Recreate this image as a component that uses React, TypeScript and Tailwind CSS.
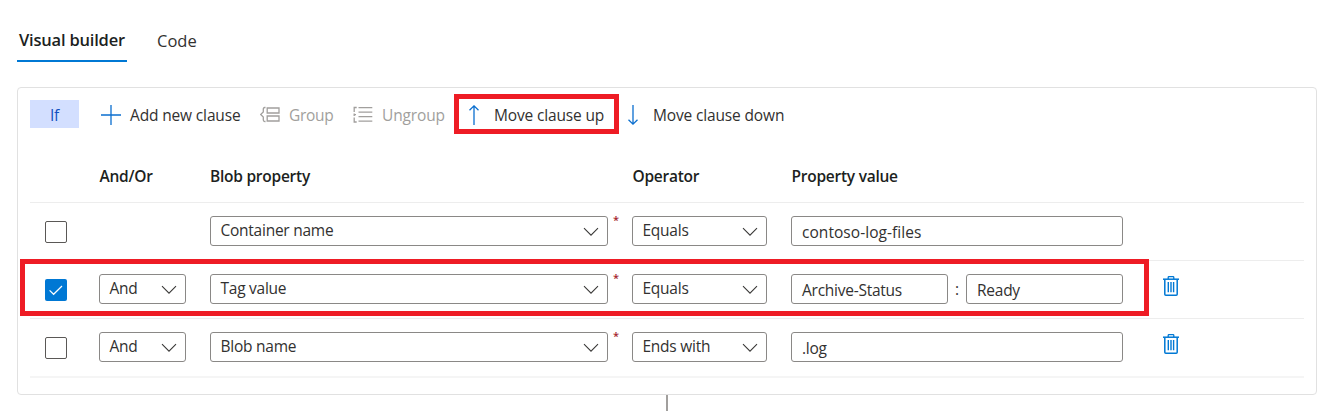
import type { ReactNode } from "react";

function Chevron() {
  return (
    <svg className="mt-px h-4 w-4 shrink-0" viewBox="0 0 16 16" fill="none" stroke="#3b3a39" strokeWidth="1.1">
      <path d="M1 4.2 L8 11.2 L15 4.2" />
    </svg>
  );
}

function Select({ value, width }: { value: string; width: string }) {
  return (
    <div className={`flex h-[30px] items-center justify-between rounded-[3px] border border-[#8a8886] bg-white pr-2 pl-[9.5px] ${width}`}>
      <span className="-mt-0.5">{value}</span>
      <Chevron />
    </div>
  );
}

function Field({ value, width }: { value: string; width: string }) {
  return (
    <div className={`flex h-[30px] items-center rounded-[3px] border border-[#8a8886] bg-white pl-[10px] ${width}`}>
      <span className="mt-px">{value}</span>
    </div>
  );
}

function Checkbox({ checked }: { checked?: boolean }) {
  if (checked) {
    return (
      <div className="mt-1 flex h-[22px] w-[22px] items-center justify-center rounded-[2px] bg-[#0078d4]">
        <svg className="h-[22px] w-[22px]" viewBox="0 0 22 22" fill="none" stroke="#fff" strokeWidth="1.2">
          <path d="M4.6 11.4 L8.6 15.3 L17 7" />
        </svg>
      </div>
    );
  }
  return <div className="mt-1 h-[22px] w-[22px] rounded-[2px] border border-[#5a5856] bg-white" />;
}

function Trash() {
  return (
    <svg className="h-5 w-4" viewBox="0 0 16 20" fill="none" stroke="#0078d4">
      <path d="M0 3.2 H16" strokeWidth="1.5" />
      <path d="M5.2 3 V1.4 Q5.2 0.7 5.9 0.7 H10.1 Q10.8 0.7 10.8 1.4 V3" strokeWidth="1.3" />
      <path d="M1.8 3.5 V18.2 Q1.8 19.2 2.8 19.2 H13.2 Q14.2 19.2 14.2 18.2 V3.5" strokeWidth="1.5" />
      <path d="M5.3 6 V16.2 M8 6 V16.2 M10.6 6 V16.2" strokeWidth="1.4" />
    </svg>
  );
}

interface RowProps {
  checked?: boolean;
  and?: boolean;
  property: string;
  operator: string;
  last?: boolean;
  children: ReactNode;
}

function Row({ checked, and, property, operator, last, children }: RowProps) {
  return (
    <div className={`flex items-start pt-[13px] pl-[15px] ${last ? "h-[59px] border-b-2 border-[#f5f5f5]" : "h-[58px] border-b border-[#ededed]"}`}>
      <div className="w-[54px] pt-px">
        <Checkbox checked={checked} />
      </div>
      <div className="w-[111px]">{and && <Select value="And" width="w-[86.5px]" />}</div>
      <Select value={property} width="w-[398px]" />
      <span className="-mt-1 w-6 pl-[5px] text-[11px] leading-4 font-semibold text-[#a4262c]">*</span>
      <Select value={operator} width="w-[135px]" />
      <div className="ml-6 flex w-[332px]">{children}</div>
      {and && (
        <div className="ml-10 pt-0.5">
          <Trash />
        </div>
      )}
    </div>
  );
}

export default function App() {
  return (
    <div className="relative h-[411px] w-[1330px] overflow-hidden bg-white font-['Open_Sans',sans-serif] text-[15.5px] leading-5 tracking-[-0.25px] whitespace-nowrap text-[#323130]">
      <div className="flex pt-[30px] pl-[17px] text-[16.5px]">
        <div className="h-8 w-[110px] border-b-2 border-[#0078d4] pl-0.5 font-semibold tracking-[-0.2px] text-[#201f1e]">Visual builder</div>
        <div className="ml-[30px] pt-px tracking-[0px]">Code</div>
      </div>

      <div className="mt-[25px] ml-[17px] h-[308px] w-[1300px] rounded-[4px] border border-[#e1e1e1] px-3">
        <div className="flex h-[54px] items-center pb-px tracking-[-0.15px]">
          <div className="-mt-px flex h-7 w-[49px] items-center justify-center bg-[#d3dfff] pt-px text-[#0f4fbe]">If</div>
          <svg className="ml-[22px] h-5 w-5" viewBox="0 0 20 20" stroke="#0b6fcf" strokeWidth="1.3">
            <path d="M10 0 V20 M0 10 H20" />
          </svg>
          <span className="ml-[9px] w-[130px]">Add new clause</span>
          <svg className="h-5 w-5" viewBox="0 0 20 20" fill="none" stroke="#a19f9d" strokeWidth="1.3">
            <path d="M5.5 2.5 H4.8 Q3.3 2.5 3.3 4 V7 L0.6 9.5 L3.3 12 V15 Q3.3 16.5 4.8 16.5 H5.5" />
            <path d="M7.2 3 H19 V8 H7.2 Z M7.2 11 H19 V16 H7.2 Z" />
          </svg>
          <span className="ml-[9px] w-[64px] tracking-[-0.3px] text-[#a19f9d]">Group</span>
          <svg className="h-5 w-5" viewBox="0 0 20 20" fill="none" stroke="#a19f9d" strokeWidth="1.3">
            <path d="M3.7 2.5 H1.2 V7 M1.2 8.5 V11 M1.2 12.5 V17 H3.7 M1.2 9.7 H3" />
            <path d="M5.5 2.7 H19.3 M5.5 7.2 H19.3 M5.5 11.7 H19.3 M5.5 16.2 H19.3" />
          </svg>
          <span className="ml-[9px] w-[87px] text-[#a19f9d]">Ungroup</span>
          <svg className="h-5 w-[10px]" viewBox="0 0 10 20" fill="none" stroke="#0b6fcf" strokeWidth="1.3">
            <path d="M5 20 V1 M0.5 5.3 L5 0.9 L9.5 5.3" />
          </svg>
          <span className="ml-[15px] w-[134px]">Move clause up</span>
          <svg className="h-5 w-[10px]" viewBox="0 0 10 20" fill="none" stroke="#0b6fcf" strokeWidth="1.3">
            <path d="M5 0 V19 M0.5 14.7 L5 19.1 L9.5 14.7" />
          </svg>
          <span className="ml-[15px]">Move clause down</span>
        </div>

        <div className="flex h-[61px] border-b border-[#ededed] pt-6 pl-[69.5px] font-semibold text-[#201f1e]">
          <span className="w-[110.5px]">And/Or</span>
          <span className="w-[422.5px]">Blob property</span>
          <span className="w-[159px]">Operator</span>
          <span>Property value</span>
        </div>

        <Row property="Container name" operator="Equals">
          <Field value="contoso-log-files" width="w-full tracking-[0.05px]" />
        </Row>
        <Row checked and property="Tag value" operator="Equals">
          <Field value="Archive-Status" width="w-[157px]" />
          <span className="w-[18px] pt-[5px] text-center">:</span>
          <Field value="Ready" width="w-[157px]" />
        </Row>
        <Row and last property="Blob name" operator="Ends with">
          <Field value=".log" width="w-full" />
        </Row>
      </div>
      <div className="ml-[666px] h-4 w-0.5 bg-[#a19f9d]" />

      <div className="absolute top-[94px] left-[454px] h-10 w-[165px] border-[5px] border-[#ee1c25]" />
      <div className="absolute top-[259px] left-[20px] h-[57px] w-[1129px] border-[5px] border-[#ee1c25]" />
    </div>
  );
}
